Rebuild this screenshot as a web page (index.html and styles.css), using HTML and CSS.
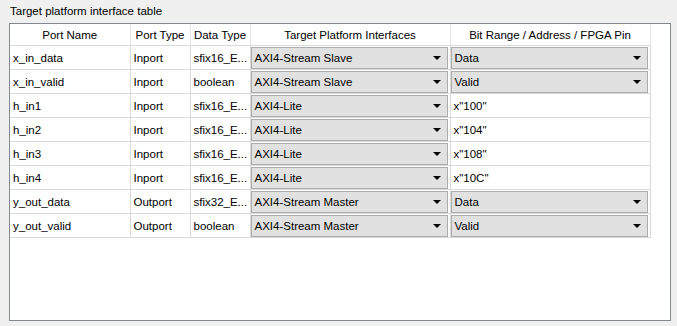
FILE: index.html
```html
<!DOCTYPE html>
<html lang="en">
<head>
    <meta charset="UTF-8">
    <title>Target platform interface table</title>
    <link rel="stylesheet" href="styles.css">
</head>
<body>
    <div class="title">Target platform interface table</div>
    <div class="panel">
        <table class="ports">
            <colgroup>
                <col class="c-name">
                <col class="c-type">
                <col class="c-data">
                <col class="c-iface">
                <col class="c-bits">
            </colgroup>
            <thead>
                <tr>
                    <th>Port Name</th>
                    <th>Port Type</th>
                    <th>Data Type</th>
                    <th>Target Platform Interfaces</th>
                    <th>Bit Range / Address / FPGA Pin</th>
                </tr>
            </thead>
            <tbody>
                <tr>
                    <td>x_in_data</td>
                    <td>Inport</td>
                    <td>sfix16_E...</td>
                    <td class="combo-cell"><div class="combo">AXI4-Stream Slave</div></td>
                    <td class="combo-cell"><div class="combo">Data</div></td>
                </tr>
                <tr>
                    <td>x_in_valid</td>
                    <td>Inport</td>
                    <td>boolean</td>
                    <td class="combo-cell"><div class="combo">AXI4-Stream Slave</div></td>
                    <td class="combo-cell"><div class="combo">Valid</div></td>
                </tr>
                <tr>
                    <td>h_in1</td>
                    <td>Inport</td>
                    <td>sfix16_E...</td>
                    <td class="combo-cell"><div class="combo">AXI4-Lite</div></td>
                    <td>x"100"</td>
                </tr>
                <tr>
                    <td>h_in2</td>
                    <td>Inport</td>
                    <td>sfix16_E...</td>
                    <td class="combo-cell"><div class="combo">AXI4-Lite</div></td>
                    <td>x"104"</td>
                </tr>
                <tr>
                    <td>h_in3</td>
                    <td>Inport</td>
                    <td>sfix16_E...</td>
                    <td class="combo-cell"><div class="combo">AXI4-Lite</div></td>
                    <td>x"108"</td>
                </tr>
                <tr>
                    <td>h_in4</td>
                    <td>Inport</td>
                    <td>sfix16_E...</td>
                    <td class="combo-cell"><div class="combo">AXI4-Lite</div></td>
                    <td>x"10C"</td>
                </tr>
                <tr>
                    <td>y_out_data</td>
                    <td>Outport</td>
                    <td>sfix32_E...</td>
                    <td class="combo-cell"><div class="combo">AXI4-Stream Master</div></td>
                    <td class="combo-cell"><div class="combo">Data</div></td>
                </tr>
                <tr>
                    <td>y_out_valid</td>
                    <td>Outport</td>
                    <td>boolean</td>
                    <td class="combo-cell"><div class="combo">AXI4-Stream Master</div></td>
                    <td class="combo-cell"><div class="combo">Valid</div></td>
                </tr>
            </tbody>
        </table>
    </div>
</body>
</html>
```

FILE: styles.css
```css
body {
    margin: 0;
    background-color: #f0f0f0;
    font-family: "Liberation Sans", Arial, sans-serif;
    font-size: 11.5px;
    color: #000;
}

.title {
    height: 23px;
    line-height: 22px;
    padding-left: 10px;
}

.panel {
    margin-left: 9px;
    width: 660px;
    height: 296px;
    background-color: #fff;
    border: 1px solid #828790;
}

.ports {
    border-collapse: collapse;
    table-layout: fixed;
    width: 640px;
}

.c-name { width: 120px; }
.c-type { width: 60px; }
.c-data { width: 60px; }
.c-iface { width: 200px; }
.c-bits { width: 200px; }

.ports th {
    height: 21px;
    padding: 0;
    font-weight: normal;
    text-align: center;
    border-left: 1px solid #e5e5e5;
    border-right: 1px solid #e5e5e5;
}

.ports th:first-child {
    border-left: none;
}

.ports td {
    height: 23px;
    padding: 0 0 0 3px;
    white-space: nowrap;
    overflow: hidden;
    border: 1px solid #d9d9d9;
}

.ports td:first-child {
    border-left: none;
}

.ports td.combo-cell {
    padding: 0 2px 0 0;
}

.combo {
    position: relative;
    height: 20px;
    line-height: 20px;
    padding-left: 3px;
    background-color: #e1e1e1;
    border: 1px solid #adadad;
}

.combo::after {
    content: "";
    position: absolute;
    right: 6px;
    top: 8px;
    border-left: 4px solid transparent;
    border-right: 4px solid transparent;
    border-top: 4px solid #000;
}
```
